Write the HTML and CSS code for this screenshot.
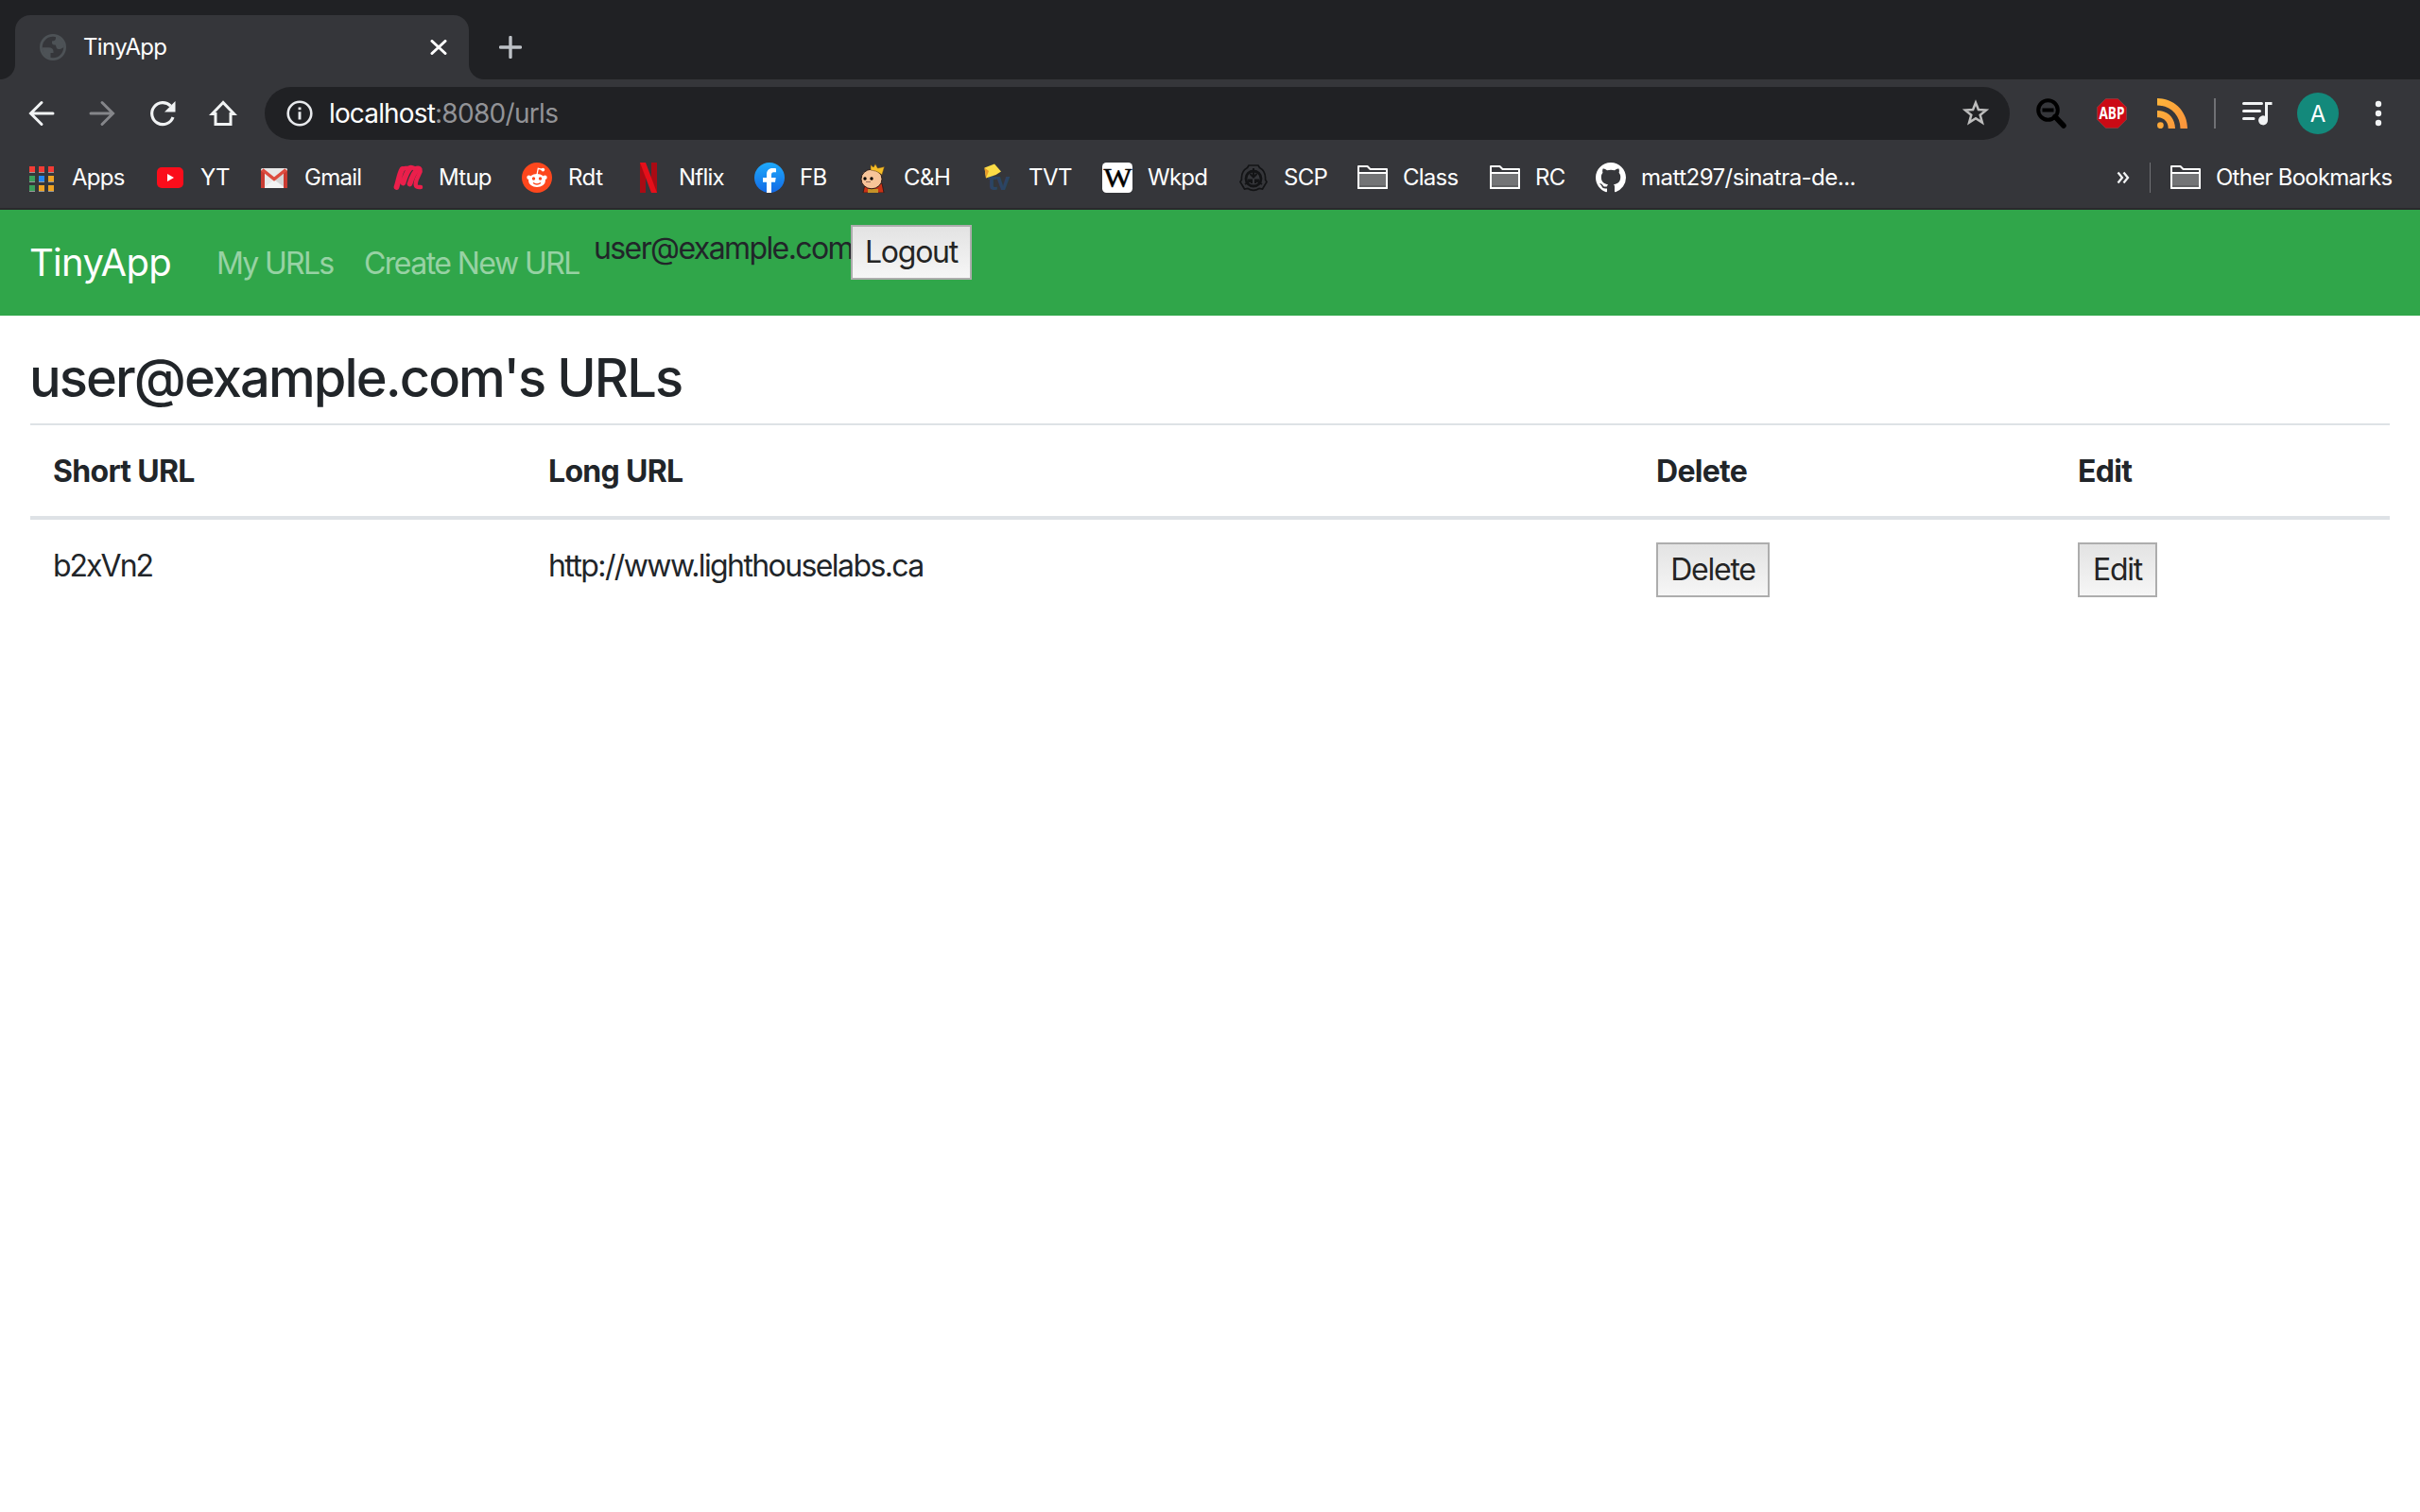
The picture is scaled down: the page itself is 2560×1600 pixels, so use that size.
FILE: index.html
```html
<!DOCTYPE html>
<html lang="en">
<head>
<meta charset="utf-8">
<title>TinyApp</title>
<link rel="stylesheet" href="styles.css">
</head>
<body>
<header class="browser">
  <div class="tabstrip">
    <div class="tab">
      <svg class="globe" width="28" height="28" viewBox="0 0 28 28"><circle cx="14" cy="14" r="12.600" fill="#35363a" stroke="#4d5256" stroke-width="2.800"/><path d="M3 14.200H9.500C13 14.200 14.500 16 14.500 18.500V20H11.500V25.500C6 24.500 2.500 20 3 14.200ZM17 2.500V4.500C17 6.500 15.500 7.500 13 7.500V9.500C13 11 14.500 11.500 16 11.500C17.500 11.500 17 14 18.500 15.500C20.500 17 23 15.500 25.500 14C26 8 22 3.500 17 2.500Z" fill="#4d5256"/></svg>
      <span class="tab-title">TinyApp</span>
      <svg class="tab-close" width="18" height="16" viewBox="0 0 18 16"><path d="M2 1.500L16 14.500M16 1.500L2 14.500" stroke="#fff" stroke-width="3" stroke-linecap="round"/></svg>
    </div>
    <svg class="new-tab" width="24" height="24" viewBox="0 0 24 24"><path d="M12 1.500V22.500M1.500 12H22.500" stroke="#bdc1c6" stroke-width="3.400" stroke-linecap="round"/></svg>
  </div>
  <div class="toolbar">
    <svg class="tool" viewBox="0 0 32 32"><path d="M28 16H5M16 4.500L4.500 16L16 27.500" fill="none" stroke="#f1f3f4" stroke-width="3" stroke-linecap="round" stroke-linejoin="miter"/></svg>
    <svg class="tool" viewBox="0 0 32 32"><path d="M4 16H27M16 4.500L27.500 16L16 27.500" fill="none" stroke="#85868a" stroke-width="3" stroke-linecap="round"/></svg>
    <svg class="tool" viewBox="0 0 32 32"><path d="M27 20A11.500 11.500 0 1 1 24.500 8.200" fill="none" stroke="#f1f3f4" stroke-width="3.200"/><path d="M29.500 3V14.500H18Z" fill="#f1f3f4"/></svg>
    <svg class="tool" viewBox="0 0 32 32"><path d="M16 4.500L4.500 16.500H8V27.500H24V16.500H27.500Z" fill="none" stroke="#f1f3f4" stroke-width="3"/></svg>
    <div class="omnibox">
      <svg width="28" height="28" viewBox="0 0 28 28"><circle cx="14" cy="14" r="12.300" fill="none" stroke="#e8eaed" stroke-width="2.600"/><path d="M14 12.300V20.500M14 7.500V10.300" stroke="#e8eaed" stroke-width="2.900"/></svg>
      <span class="address"><b class="host">localhost</b><span class="path">:8080/urls</span></span>
      <svg class="star" width="30" height="30" viewBox="0 0 30 30"><path d="M15 3.600L17.900 11L26 11.600L19.700 16.700L21.900 24.600L15 20.200L8.100 24.600L10.300 16.700L4 11.600L12.100 11Z" fill="none" stroke="#bdbdbd" stroke-width="2.500"/></svg>
    </div>
    <div class="extensions">
      <svg width="32" height="32" viewBox="0 0 32 32"><circle cx="12.500" cy="12.500" r="10.300" fill="none" stroke="#000" stroke-width="4"/><path d="M6.500 12.500H18.500" stroke="#000" stroke-width="4"/><path d="M20 19.500L29 29" stroke="#000" stroke-width="5.500" stroke-linecap="round"/></svg>
      <svg width="32" height="32" viewBox="0 0 32 32"><path d="M9.500.5H22.500L31.500 9.500V22.500L22.500 31.500H9.500L.5 22.500V9.500Z" fill="#cb0a15" stroke="#86494c" stroke-width=".6"/><text class="abp" x="16" y="21.500" text-anchor="middle" textLength="27" lengthAdjust="spacingAndGlyphs">ABP</text></svg>
      <svg width="32" height="32" viewBox="0 0 32 32"><defs><linearGradient id="rss" x1="0" y1="0" x2="1" y2="1"><stop offset="0" stop-color="#fdb53a"/><stop offset="1" stop-color="#fb923c"/></linearGradient></defs><path d="M0 0C18 0 32 14 32 32H24.500C24.500 18 14 7.500 0 7.500ZM0 13C11 13 19 21 19 32H11.700C11.700 25 7 20.300 0 20.300Z" fill="url(#rss)"/><circle cx="3.400" cy="28.700" r="3.400" fill="#fca83a"/></svg>
      <i class="rule"></i>
      <svg width="32" height="26" viewBox="0 0 32 26"><path d="M1.500 2.500H20.500M1.500 10.500H18.500M1.500 18.500H12" stroke="#f1f3f4" stroke-width="3" stroke-linecap="round"/><path d="M31.500 1V4H27V20A5 5 0 1 1 24 15.800V1Z" fill="#f1f3f4"/></svg>
      <span class="avatar">A</span>
      <svg class="menu" width="8" height="28" viewBox="0 0 8 28"><g fill="#f1f3f4"><circle cx="4" cy="4" r="3.200"/><circle cx="4" cy="14" r="3.200"/><circle cx="4" cy="24" r="3.200"/></g></svg>
    </div>
  </div>
  <nav class="bookmarks">
    <div class="bm near"><svg viewBox="0 0 32 32"><path d="M3 4H29V10H3Z" fill="#f23c35"/><path d="M3 14H9V20H3ZM3 24H9V30H3Z" fill="#3a9f5b"/><path d="M13 14H19V20H13Z" fill="#2387f2"/><path d="M23 14H29V20H23ZM13 24H29V30H13Z" fill="#efa221"/><path d="M3 10.500H29M3 20.500H29M3 30.500H29" stroke="#999" stroke-width="1"/><path d="M11 2V32M21 2V32" stroke="#35363a" stroke-width="4"/></svg><span>Apps</span></div>
    <div class="bm near"><svg viewBox="0 0 32 32"><rect x="2" y="5" width="28" height="22" rx="5" fill="#fb0d1b"/><path d="M13 12L20 16L13 20Z" fill="#fff"/></svg><span>YT</span></div>
    <div class="bm near"><svg viewBox="0 0 32 32"><rect x="2" y="6" width="28" height="21" rx="1.500" fill="#e8e8e8"/><path d="M5 27L16 18L27 27Z" fill="#f3f3f3"/><path d="M16 18L27 9V26Z" fill="#d5d5d5"/><path d="M2 27V8L6 11V27ZM30 27V8L26 11V27Z" fill="#c93c32"/><path d="M3.500 7.500L16 17.500L28.500 7.500" fill="none" stroke="#dd4b3e" stroke-width="3.500"/></svg><span>Gmail</span></div>
    <div class="bm near"><svg viewBox="0 0 32 32"><path d="M3.500 26C5.500 20 6.500 12 9.500 7M10.500 21.500C12.500 15 14 10 17.500 6.500M17.500 22.500C19.500 16 22 10 26 7" fill="none" stroke="#eb1f4b" stroke-width="5.800" stroke-linecap="round"/><path d="M9 7.500C12 4.500 14 7 17 5.500C20 3.500 21 7.500 24.500 6C29 5 29.500 8.500 27.500 12C25.500 16 22.500 21 24 24.500C25 26.500 27 26 29 26" fill="none" stroke="#eb1f4b" stroke-width="4.500" stroke-linecap="round" stroke-linejoin="round"/></svg><span>Mtup</span></div>
    <div class="bm light"><svg viewBox="0 0 32 32"><circle cx="16" cy="16" r="16" fill="#fd471d"/><g fill="#fff"><ellipse cx="16" cy="19" rx="9" ry="7"/><circle cx="7.500" cy="15.800" r="2.200"/><circle cx="24.500" cy="15.800" r="2.200"/><circle cx="22.300" cy="7.600" r="1.900"/></g><path d="M16 13L17.300 6.300L22 7.500" fill="none" stroke="#fff" stroke-width="1.300"/><circle cx="12.500" cy="17" r="1.700" fill="#fd471d"/><circle cx="19.500" cy="17" r="1.700" fill="#fd471d"/><path d="M12 21.500Q16 24.500 20 21.500" fill="none" stroke="#fd471d" stroke-width="1.400"/></svg><span>Rdt</span></div>
    <div class="bm near"><svg viewBox="0 0 32 32"><path d="M7 0H13V32L7 32ZM19 0H25V32H19Z" fill="#a90b14"/><path d="M7 0H13L25 32H19Z" fill="#e50f1a"/></svg><span>Nflix</span></div>
    <div class="bm near"><svg viewBox="0 0 32 32"><defs><linearGradient id="fb" x2="0" y2="1"><stop stop-color="#1eaafb"/><stop offset="1" stop-color="#1369e5"/></linearGradient></defs><circle cx="16" cy="16" r="16" fill="url(#fb)"/><path d="M13 32V20.700H9V16H13V12.500C13 8.500 15.500 6 19 6C20.500 6 23 6.200 23 6.200V10.300H20.500C18.500 10.300 18 11.500 18 13V16H22.700L22 20.700H18V32Z" fill="#fff"/></svg><span>FB</span></div>
    <div class="bm far light"><svg viewBox="0 0 32 32"><path d="M9 23L7 32H29L27 22Z" fill="#c83216" stroke="#241615" stroke-width=".8"/><path d="M12 28H23V32H12Z" fill="#c59228"/><ellipse cx="16" cy="17.500" rx="11" ry="10.300" fill="#f7c499" stroke="#2b1c17" stroke-width="1"/><path d="M15 8L15 2.500L18 5L20 1.500L22.500 6L29.500 4.500L27 13Q21 8 15 8Z" fill="#f5bd26" stroke="#60421b" stroke-width=".5"/><circle cx="9" cy="17" r="1.700"/><circle cx="16" cy="17" r="1.700"/><path d="M10 20.500H15" stroke="#956d5c" stroke-width="1"/></svg><span>C&amp;H</span></div>
    <div class="bm far light"><svg viewBox="0 0 32 32"><text class="tv" x="7" y="29" textLength="23">tv</text><path d="M3.500 5.500L14 1.500L21 9.500L15.500 13L5 16.500Z" fill="#fbdc46"/><path d="M3.500 5.500L8 9L5 16.500Z" fill="#e79b2b"/></svg><span>TVT</span></div>
    <div class="bm near"><svg viewBox="0 0 32 32"><rect width="32" height="32" rx="4.500" fill="#fff"/><text class="wiki" x="16" y="26" text-anchor="middle" textLength="29" lengthAdjust="spacingAndGlyphs">W</text></svg><span>Wkpd</span></div>
    <div class="bm near"><svg viewBox="0 0 32 32"><g fill="none" stroke="#131416"><path d="M11 3H21L22.500 5.500C27 8 29 13 28.500 18L30 20.500L25.500 28L22 27.500C18 30 14 30 10 27.500L6.500 28L2 20.500L3.500 18C3 13 5 8 9.500 5.500Z" stroke-width="1.700"/><circle cx="16" cy="17" r="8" stroke-width="2.800"/><path d="M16 6V15M12.500 12L16 15.500L19.500 12M7 23L14 18.500M10 18.500H14V22M25 23L18 18.500M22 18.500H18V22" stroke-width="2"/></g></svg><span>SCP</span></div>
    <div class="bm near"><svg viewBox="0 0 32 32"><path d="M1 27V4H10.500L13.500 7H31V27Z" fill="#35363a" stroke="#fff" stroke-width="2" stroke-linejoin="round"/><path d="M1 11H31V27H1Z" fill="#737476" stroke="#fff" stroke-width="2" stroke-linejoin="round"/><path d="M2 25H30" stroke="#626365" stroke-width="2"/></svg><span>Class</span></div>
    <div class="bm near"><svg viewBox="0 0 32 32"><path d="M1 27V4H10.500L13.500 7H31V27Z" fill="#35363a" stroke="#fff" stroke-width="2" stroke-linejoin="round"/><path d="M1 11H31V27H1Z" fill="#737476" stroke="#fff" stroke-width="2" stroke-linejoin="round"/><path d="M2 25H30" stroke="#626365" stroke-width="2"/></svg><span>RC</span></div>
    <div class="bm near repo"><svg viewBox="0 0 16 16"><path fill="#fff" d="M8 0C3.580 0 0 3.580 0 8c0 3.540 2.290 6.530 5.470 7.590.4.070.55-.17.55-.38 0-.19-.01-.82-.01-1.490-2.010.37-2.530-.49-2.690-.94-.09-.23-.48-.94-.82-1.130-.28-.15-.68-.52-.01-.53.63-.01 1.080.58 1.230.82.72 1.210 1.870.87 2.330.66.070-.52.28-.87.51-1.070-1.780-.2-3.640-.89-3.640-3.950 0-.87.31-1.590.82-2.150-.08-.2-.36-1.020.08-2.120 0 0 .67-.21 2.200.82.64-.18 1.320-.27 2-.27s1.360.09 2 .27c1.530-1.040 2.200-.82 2.200-.82.44 1.100.16 1.920.08 2.120.51.56.82 1.270.82 2.150 0 3.070-1.870 3.750-3.650 3.950.29.25.54.73.54 1.480 0 1.070-.01 1.930-.01 2.200 0 .21.15.46.55.38A8.010 8.010 0 0 0 16 8c0-4.420-3.580-8-8-8z"/></svg><span>matt297/sinatra-de...</span></div>
    <svg class="more" width="14" height="14" viewBox="0 0 14 14"><path d="M1.500 1.500L6 7L1.500 12.500M7.500 1.500L12 7L7.500 12.500" fill="none" stroke="#f1f3f4" stroke-width="2.300"/></svg>
    <i class="rule thin"></i>
    <div class="bm near"><svg viewBox="0 0 32 32"><path d="M1 27V4H10.500L13.500 7H31V27Z" fill="#35363a" stroke="#fff" stroke-width="2" stroke-linejoin="round"/><path d="M1 11H31V27H1Z" fill="#737476" stroke="#fff" stroke-width="2" stroke-linejoin="round"/><path d="M2 25H30" stroke="#626365" stroke-width="2"/></svg><span>Other Bookmarks</span></div>
  </nav>
</header>
<nav class="navbar">
  <a class="brand">TinyApp</a>
  <a class="nav-link my">My URLs</a>
  <a class="nav-link create">Create New URL</a>
  <form class="session"><span class="user">user@example.com</span><button type="button" class="logout">Logout</button></form>
</nav>
<main>
  <h1>user@example.com's URLs</h1>
  <table>
    <colgroup><col class="c-short"><col class="c-long"><col class="c-delete"><col></colgroup>
    <thead><tr><th>Short URL</th><th>Long URL</th><th>Delete</th><th>Edit</th></tr></thead>
    <tbody><tr><td class="short">b2xVn2</td><td>http://www.lighthouselabs.ca</td><td class="action"><button type="button" class="delete">Delete</button></td><td class="action"><button type="button" class="edit">Edit</button></td></tr></tbody>
  </table>
</main>
</body>
</html>
```
FILE: styles.css
```css
* { box-sizing: border-box; }
body { margin: 0; background: #fff; color: #212529; font-family: Inter, "Liberation Sans", sans-serif; font-size: 32px; line-height: 48px; letter-spacing: -1.6px; }
svg { display: block; flex: none; }

.browser { height: 222px; background: #35363a; border-bottom: 2px solid #29292c; color: #fff; letter-spacing: 0; }
.tabstrip { height: 84px; background: #202124; display: flex; align-items: flex-end; padding-left: 16px; }
.tab { position: relative; width: 480px; height: 68px; background: #35363a; border-radius: 16px 16px 0 0; display: flex; align-items: center; padding: 0 23px 0 26px; }
.tab::before, .tab::after { content: ""; position: absolute; bottom: 0; width: 16px; height: 16px; }
.tab::before { left: -16px; background: radial-gradient(circle at 0 0, #202124 15.5px, #35363a 16.5px); }
.tab::after { right: -16px; background: radial-gradient(circle at 100% 0, #202124 15.5px, #35363a 16.5px); }
.tab-title { margin-left: 18px; font-size: 24px; line-height: 32px; letter-spacing: -.65px; }
.tab-close { margin-left: auto; }
.new-tab { margin: 0 0 22px 32px; }

.toolbar { height: 72px; display: flex; align-items: center; padding-left: 28px; }
.tool { width: 32px; height: 32px; margin-right: 32px; }
.omnibox { width: 1846px; height: 56px; margin-left: -4px; border-radius: 28px; background: #202124; display: flex; align-items: center; padding: 0 21px 0 23px; }
.address { margin-left: 17px; font-size: 28px; line-height: 40px; letter-spacing: -.7px; }
.host { font-weight: 430; letter-spacing: -.85px; }
.path { color: #929397; }
.star { margin-left: auto; }
.extensions { flex: 1; display: flex; align-items: center; padding-left: 28px; }
.extensions > svg { margin-right: 32px; }
.extensions .rule { margin: 0 28px 0 -4px; }
.extensions > .menu { margin-right: 0; }
.rule { width: 2px; height: 32px; background: #707175; }
.rule.thin { width: 1px; background: #707175; }
.avatar { width: 44px; height: 44px; margin: 0 38px 0 -6px; border-radius: 50%; background: #13897b; text-align: center; font-size: 24px; line-height: 45px; }
.abp { font: 700 17px "Open Sans", sans-serif; fill: #fff; }
.tv { font: 700 25px "Open Sans", sans-serif; fill: #2b4564; }
.wiki { font: 29px "Liberation Serif", serif; fill: #000; stroke: #000; stroke-width: .5px; }

.bookmarks { height: 64px; display: grid; align-items: center; padding-left: 28px; font-size: 24px; line-height: 32px; white-space: nowrap; letter-spacing: -.75px;
  grid-template-columns: 136px 110px 142px 136px 118px 128px 108px 132px 128px 144px 126px 140px 112px 551px 35px 22px 1fr; }
.bm { display: flex; align-items: center; gap: 17px; }
.bm svg { width: 32px; height: 32px; }
.bm.near { gap: 16px; }
.bm.far { gap: 18px; }
.bm.light { letter-spacing: -.5px; }
.bm.repo { letter-spacing: -.52px; }

.navbar { height: 112px; padding: 16px 32px; background: #30a64a; display: flex; align-items: center; white-space: nowrap; }
.brand { width: 183px; margin-left: -1px; color: #fff; font-size: 40px; letter-spacing: -.7px; }
.nav-link { color: rgba(255,255,255,.5); padding: 2px 16px 0; }
.my { width: 156px; margin-left: -1px; letter-spacing: -1.7px; }
.create { width: 260px; letter-spacing: -1.55px; }
.session { align-self: flex-start; display: flex; align-items: flex-start; }
.user { width: 272px; margin-left: -1px; padding-top: 1px; letter-spacing: -1.6px; }
button { font: inherit; letter-spacing: -1.25px; color: #242424; height: 58px; padding: 0; border: 2px solid #adadad; background: linear-gradient(#e3e3e3, #f6f6f6); display: block; text-align: center; }
.logout { width: 128px; }
.delete { width: 120px; }
.edit { width: 84px; }

main { padding: 33px 32px 0; }
h1 { margin: 0 0 14px -1px; font-size: 56px; line-height: 67px; font-weight: 500; letter-spacing: -1.9px; white-space: nowrap; }
table { width: 2496px; table-layout: fixed; border-collapse: separate; border-spacing: 0; }
.c-short { width: 524px; }
.c-long { width: 1172px; }
.c-delete { width: 446px; }
th, td { padding: 25px 24px 23px; text-align: left; vertical-align: top; border-top: 2px solid #dee2e6; }
th { font-weight: 700; letter-spacing: -.7px; border-bottom: 4px solid #dee2e6; height: 102px; }
td { border-top: 0; }
td.short { letter-spacing: -2px; }
td.action { padding-top: 24px; }
```
